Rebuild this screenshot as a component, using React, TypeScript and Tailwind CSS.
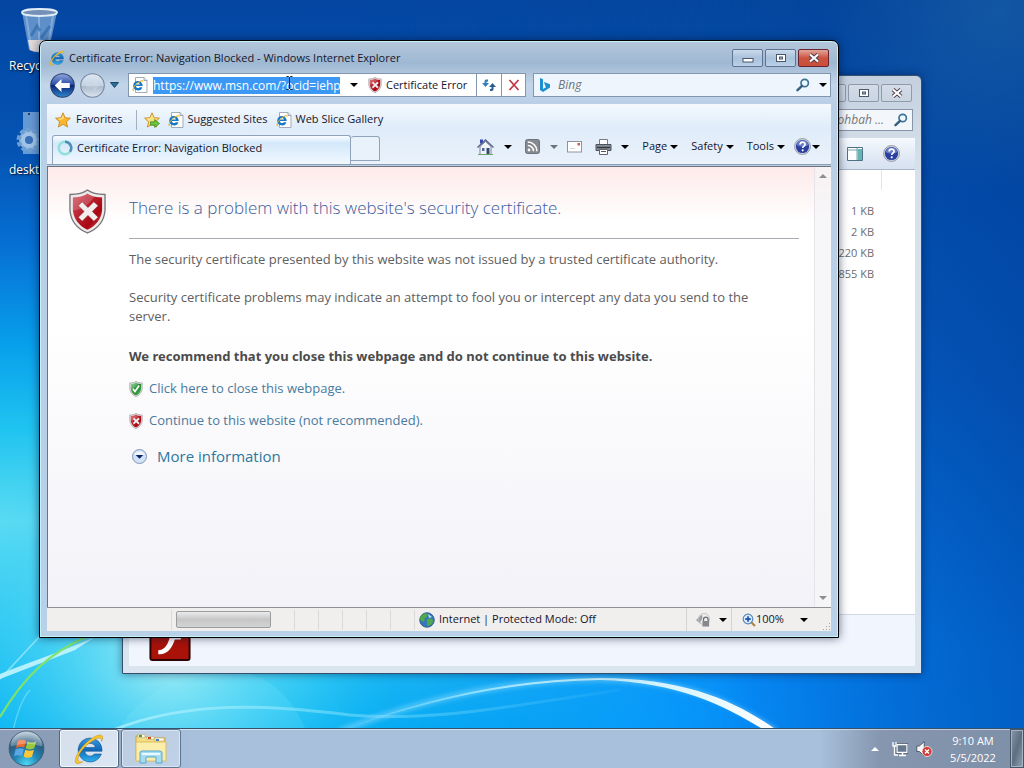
import React from "react";

type IconProps = { className?: string };

const Wallpaper = () => (
  <svg className="absolute inset-0 h-full w-full" viewBox="0 0 1024 768" preserveAspectRatio="none" aria-hidden="true">
    <defs>
      <linearGradient id="sky" x1="0" y1="0" x2="0" y2="1">
        <stop offset="0" stopColor="#04479f" />
        <stop offset="0.2" stopColor="#0450ae" />
        <stop offset="0.5" stopColor="#0560c8" />
        <stop offset="0.85" stopColor="#0481f2" />
        <stop offset="1" stopColor="#0484f4" />
      </linearGradient>
      <linearGradient id="leftSky" x1="0" y1="0" x2="0" y2="1">
        <stop offset="0" stopColor="#0446a2" />
        <stop offset="0.2" stopColor="#0454b4" />
        <stop offset="0.32" stopColor="#0670d4" />
        <stop offset="0.45" stopColor="#07a0ec" />
        <stop offset="0.56" stopColor="#20c4f0" />
        <stop offset="0.68" stopColor="#5cdcf2" />
        <stop offset="0.8" stopColor="#35ccf2" />
        <stop offset="0.95" stopColor="#08b4f2" />
      </linearGradient>
      <linearGradient id="leftFade" x1="0" y1="0" x2="1" y2="0">
        <stop offset="0" stopColor="#fff" />
        <stop offset="0.4" stopColor="#fff" />
        <stop offset="1" stopColor="#000" />
      </linearGradient>
      <mask id="leftMask">
        <rect width="760" height="768" fill="url(#leftFade)" />
      </mask>
      <radialGradient id="glow" cx="170" cy="655" r="230" gradientUnits="userSpaceOnUse">
        <stop offset="0" stopColor="#b4f2f4" stopOpacity="0.9" />
        <stop offset="0.45" stopColor="#6ce0f6" stopOpacity="0.5" />
        <stop offset="1" stopColor="#20c0f8" stopOpacity="0" />
      </radialGradient>
      <radialGradient id="midGlow" cx="620" cy="740" r="280" gradientUnits="userSpaceOnUse">
        <stop offset="0" stopColor="#0898ff" stopOpacity="0.8" />
        <stop offset="1" stopColor="#0898ff" stopOpacity="0" />
      </radialGradient>
      <linearGradient id="rightShade" x1="0" y1="0" x2="1" y2="0">
        <stop offset="0" stopColor="#003a94" stopOpacity="0" />
        <stop offset="1" stopColor="#003a94" stopOpacity="0.5" />
      </linearGradient>
      <linearGradient id="arc" x1="0" y1="0" x2="1" y2="0">
        <stop offset="0" stopColor="#8ce8ff" stopOpacity="0.2" />
        <stop offset="0.4" stopColor="#b0ecff" stopOpacity="0.9" />
        <stop offset="1" stopColor="#ffffff" />
      </linearGradient>
      <linearGradient id="faintArc" x1="0" y1="0" x2="1" y2="0">
        <stop offset="0" stopColor="#b4f4ff" stopOpacity="0.7" />
        <stop offset="0.5" stopColor="#9aeaff" stopOpacity="0.4" />
        <stop offset="1" stopColor="#9aeaff" stopOpacity="0.05" />
      </linearGradient>
      <radialGradient id="haze" cx="1000" cy="10" r="180" gradientUnits="userSpaceOnUse">
        <stop offset="0" stopColor="#2a78b0" stopOpacity="0.4" />
        <stop offset="1" stopColor="#2a78b0" stopOpacity="0" />
      </radialGradient>
      <filter id="soft" x="-10%" y="-30%" width="120%" height="160%">
        <feGaussianBlur stdDeviation="2.5" />
      </filter>
    </defs>
    <rect width="1024" height="768" fill="url(#sky)" />
    <rect width="1024" height="768" fill="url(#midGlow)" />
    <rect width="760" height="768" fill="url(#leftSky)" mask="url(#leftMask)" />
    <rect width="1024" height="768" fill="url(#glow)" />
    <rect x="720" width="304" height="768" fill="url(#rightShade)" />
    <rect width="1024" height="768" fill="url(#haze)" />
    <path d="M115 735C140 690 190 668 230 670C275 674 296 705 308 735Z" fill="#8ff0ff" opacity="0.15" />
    <path d="M116 729C190 700 270 705 350 715C440 722 520 704 620 690" fill="none" stroke="url(#faintArc)" strokeWidth="3" />
    <path d="M340 731C420 700 510 679 600 679C690 680 735 705 776 731" fill="none" stroke="#8fdcff" strokeWidth="5" opacity="0.6" filter="url(#soft)" />
    <path d="M340 731C420 699 510 679 600 678C690 678 740 704 778 731L766 731C725 706 680 682 600 680C510 681 420 702 340 731Z" fill="url(#arc)" />
    <path d="M0 674C30 662 60 652 95 637L75 650L0 679Z" fill="#d4faff" opacity="0.8" />
    <path d="M0 679L40 636" stroke="#c4f7ff" strokeWidth="1.5" opacity="0.6" />
    <path d="M0 717C25 675 50 653 86 637" fill="none" stroke="#7ee36a" strokeWidth="2.2" />
    <path d="M12 735C17 712 22 698 30 690" fill="none" stroke="#8de9fb" opacity="0.5" strokeWidth="1.5" />
  </svg>
);

const IeLogo = ({ className }: IconProps) => (
  <svg className={className} viewBox="0 0 32 32" aria-hidden="true">
    <defs>
      <linearGradient id="ieBlue" x1="0" y1="0" x2="0" y2="1">
        <stop offset="0" stopColor="#3a9be0" />
        <stop offset="0.5" stopColor="#1268b8" />
        <stop offset="1" stopColor="#2db4ee" />
      </linearGradient>
    </defs>
    <path d="M17 5a12 12 0 1 0 11.400 16H21.500a5.500 5.500 0 0 1-9.800-2.800H29V17A12 12 0 0 0 17 5Zm-5.200 9.500a5.400 5.400 0 0 1 10.500 0Z" fill="url(#ieBlue)" stroke="#0d4d92" strokeWidth="0.6" />
    <path d="M10 28.500C5 32 1 31.500 2.500 25.500C4.500 18 14 7 23 3C29 .6 31.500 3 28.500 8.500C29 4.500 26.500 4 22 6.500C13 11 5.500 20 5 25.500C4.800 29 7 29.500 10 28.500Z" fill="#f6c52c" stroke="#c4901a" strokeWidth="0.5" />
  </svg>
);

const PageIcon = ({ className }: IconProps) => (
  <svg className={className} viewBox="0 0 16 16" aria-hidden="true">
    <path d="M3.500.5h8.500l3 3V15.500H3.500Z" fill="#fff" stroke="#a3abb7" />
    <path d="M12 .5v3h3" fill="#dfe6ee" stroke="#8a93a0" strokeWidth="0.8" />
    <path d="M5.800 4A4.700 4.700 0 1 0 10.400 10.200H7.700a2.200 2.200 0 0 1-3.900-1.100h6.900A4.800 4.800 0 0 0 5.800 4Zm-2 3.500a2.200 2.200 0 0 1 4.100 0Z" fill="#1878c8" />
    <path d="M3 13.500C1 14.500 0 14 .6 12C1.500 9 6 4.500 9.500 3.300C11.500 2.700 12 4 11 5.500C11 4 10 4 8.500 4.800C5 6.500 1.800 10 1.700 12C1.700 13.300 2.200 13.600 3 13.500Z" fill="#e9b92a" />
  </svg>
);

const Shield = ({ className, ok }: IconProps & { ok?: boolean }) => (
  <svg className={className} viewBox="0 0 38 46" aria-hidden="true">
    <defs>
      <linearGradient id="shieldRed" x1="0" y1="0" x2="1" y2="1">
        <stop offset="0" stopColor="#d0505c" />
        <stop offset="0.45" stopColor="#b81c2a" />
        <stop offset="0.7" stopColor="#a80712" />
        <stop offset="1" stopColor="#d8505a" />
      </linearGradient>
      <linearGradient id="shieldGreen" x1="0" y1="0" x2="1" y2="1">
        <stop offset="0" stopColor="#7cc884" />
        <stop offset="0.5" stopColor="#1f8a2c" />
        <stop offset="1" stopColor="#56b860" />
      </linearGradient>
    </defs>
    <path d="M19 1C14 5 7 5.500 1 5.500V22C2 33 9 41 19 45C29 41 36 33 37 22V5.500C31 5.500 24 5 19 1Z" fill="#eeeaea" stroke="#77777c" strokeWidth="1.400" />
    <path d="M19 4.500C14 8 8.500 8.500 4 8.500V22C5 31 10.500 38 19 41.800C27.500 38 33 31 34 22V8.500C29.500 8.500 24 8 19 4.500Z" fill={ok ? "url(#shieldGreen)" : "url(#shieldRed)"} />
    <path d="M19 4.500C14 8 8.500 8.500 4 8.500V22C14 21 22 15 26 7.300C23.500 6.800 21 6 19 4.500Z" fill="#fff" opacity="0.18" />
    {ok ? (
      <path d="M10 22l6 8L28 13" fill="none" stroke="#fff" strokeWidth="5" />
    ) : (
      <path d="M9.500 17L13.500 13l6 6 6-6 4.500 4-6 6 6 6-4.500 4-6-6-6 6-4-4 6-6Z" fill="#f3eeee" stroke="#7d0e18" strokeWidth="0.5" />
    )}
  </svg>
);

const Caret = ({ className = "text-black" }: IconProps) => (
  <svg className={`h-1 w-2 shrink-0 ${className}`} viewBox="0 0 8 4" aria-hidden="true">
    <path d="M0 0h8L4 4Z" fill="currentColor" />
  </svg>
);

const Magnifier = ({ className }: IconProps) => (
  <svg className={className} viewBox="0 0 14 14" aria-hidden="true">
    <circle cx="8.700" cy="5" r="3.700" fill="#eef8ff" stroke="#3d7296" strokeWidth="1.700" />
    <path d="M6 7.800L1.500 12.200" stroke="#34607f" strokeWidth="2.400" strokeLinecap="round" />
  </svg>
);

const HelpIcon = ({ className }: IconProps) => (
  <svg className={className} viewBox="0 0 16 16" aria-hidden="true">
    <circle cx="8" cy="8" r="7.500" fill="#cdd2dc" stroke="#8d94a4" strokeWidth="0.8" />
    <circle cx="8" cy="8" r="6.200" fill="#2a3f9e" />
    <path d="M2.500 6.500A5.700 5.700 0 0 1 13.500 6.500C10 8.500 6 8.500 2.500 6.500Z" fill="#7f92d8" opacity="0.75" />
    <path d="M5.800 6.200c0-3.200 4.700-3 4.600-.2 0 1.700-2.200 1.700-2.200 3.400" fill="none" stroke="#fff" strokeWidth="1.600" />
    <circle cx="8.200" cy="11.600" r="1" fill="#fff" />
  </svg>
);

const Star = ({ className, add }: IconProps & { add?: boolean }) => (
  <svg className={className} viewBox="0 0 16 16" aria-hidden="true">
    <path d="M8 .8l2.100 4.900 5.300.5-4 3.600 1.200 5.200L8 12.300 3.400 15l1.200-5.200-4-3.600 5.300-.5Z" fill={add ? "#f9df73" : "#f8b62c"} stroke="#c98a1c" strokeWidth="0.9" strokeLinejoin="round" />
    <path d="M8 2.800l1.200 3.500-4.200 2-2.400-1.500 3.800-.5Z" fill="#fde9a0" opacity="0.8" />
    {add && <path d="M6.500 9.800h4.200V7.600l4.800 3.900-4.800 3.900v-2.200H6.500Z" fill="#6cc43c" stroke="#3f8a22" strokeWidth="0.8" />}
  </svg>
);

const BackArrow = () => (
  <svg className="h-[25px] w-[25px]" viewBox="0 0 24 24" aria-hidden="true">
    <defs>
      <linearGradient id="back" x1="0" y1="0" x2="0" y2="1">
        <stop offset="0" stopColor="#93a9dc" />
        <stop offset="0.45" stopColor="#2c4fa8" />
        <stop offset="0.5" stopColor="#0c2474" />
        <stop offset="1" stopColor="#2f8ad0" />
      </linearGradient>
    </defs>
    <circle cx="12" cy="12" r="11.300" fill="url(#back)" stroke="#2a3f70" />
    <path d="M4.500 12L11 5.800v3.700h8v5h-8v3.700Z" fill="#fff" />
  </svg>
);

const ForwardArrow = () => (
  <svg className="h-[25px] w-[25px]" viewBox="0 0 24 24" aria-hidden="true">
    <defs>
      <linearGradient id="fwd" x1="0" y1="0" x2="0" y2="1">
        <stop offset="0" stopColor="#dfe8f3" />
        <stop offset="0.5" stopColor="#c5d2e2" />
        <stop offset="0.52" stopColor="#a9b8ca" />
        <stop offset="1" stopColor="#dce6f0" />
      </linearGradient>
    </defs>
    <circle cx="12" cy="12" r="11.300" fill="url(#fwd)" stroke="#76859b" />
    <path d="M19 12l-6-5.500V10H5.500v4H13v3.500Z" fill="#d6dfea" opacity="0.35" />
  </svg>
);

const WindowButton = ({ kind, dim }: { kind: "min" | "max" | "close"; dim?: boolean }) => {
  const tone = dim
    ? "border-[#8e9bab] bg-gradient-to-b from-[#d3dce7] to-[#cad5e2]"
    : kind === "close"
      ? "border-[#6b2330] bg-gradient-to-b from-[#e0a59c] via-[#cc5340] to-[#c8503c]"
      : "border-[#5e7390] bg-gradient-to-b from-[#cbdbec] via-[#a9c1db] to-[#b9d0e8]";
  return (
    <button aria-label={kind} className={`flex h-[18px] w-[31px] items-center justify-center rounded-[2px] border ${tone}`}>
      <svg className="h-3 w-3" viewBox="0 0 12 12" aria-hidden="true">
        {kind === "min" && <rect x="1" y="6.500" width="10" height="3.500" fill="#fff" stroke="#4b566a" />}
        {kind === "max" && (
          <>
            <rect x="1.500" y="2.500" width="9" height="7" fill="#fff" stroke="#4b566a" />
            <rect x="4.500" y="5" width="3" height="2" fill="#a9c1db" stroke="#4b566a" />
          </>
        )}
        {kind === "close" && (
          <>
            <path d="M2 2.500l8 7M10 2.500l-8 7" stroke="#4b3c48" strokeWidth="4" />
            <path d="M2 2.500l8 7M10 2.500l-8 7" stroke="#fff" strokeWidth="2.200" />
          </>
        )}
      </svg>
    </button>
  );
};

const DesktopIcons = () => (
  <div className="absolute left-[9px] top-[6px] text-xs leading-4 text-white [text-shadow:1px_1px_2px_#000]">
    <a href="#recycle" className="block w-20">
      <svg className="ml-2 h-12 w-12" viewBox="0 0 48 48" aria-hidden="true">
        <path d="M5 6L12 44Q22 49 32 44L40 6Z" fill="#a9cbe8" opacity="0.55" />
        <path d="M11 34L13 44Q22 48 31 44L32 34Z" fill="#efe0d8" opacity="0.9" />
        <path d="M9 9l5 32M22 10v34M36 9l-5 32" stroke="#d6ecff" strokeWidth="2" opacity="0.3" />
        <path d="M14 30l6-10 3 5M33 20l-9 12" stroke="#2868a8" strokeWidth="3" fill="none" opacity="0.6" />
        <ellipse cx="22.500" cy="6.500" rx="17.500" ry="3.500" fill="#7590b8" stroke="#e2edf6" strokeWidth="1.800" />
      </svg>
      <span className="mt-1 block">Recycle Bin</span>
    </a>
    <a href="#desktop-ini" className="mt-9 block w-20">
      <svg className="ml-1 h-12 w-12" viewBox="0 0 48 48" aria-hidden="true">
        <path d="M10 2h28v42H10Z" fill="#8fb8e4" opacity="0.7" />
        <circle cx="16" cy="4" r="1" fill="#123" />
        <circle cx="16" cy="30" r="10" fill="#8db4dc" stroke="#6e9fd0" strokeWidth="5" strokeDasharray="4 2.300" />
        <circle cx="16" cy="30" r="8" fill="#9fc4e8" />
        <circle cx="16" cy="30" r="4" fill="#3a70b8" />
      </svg>
      <span className="mt-1 block">desktop.ini</span>
    </a>
  </div>
);

const ExplorerWindow = () => (
  <section aria-label="Windows Explorer" className="absolute bottom-[54px] left-[122px] right-[102px] top-[75px] flex flex-col rounded-t-md border border-[#34506e] bg-gradient-to-b from-[#c4d0de] via-[#d6e1ec] via-15% to-[#dae5ef] px-[6px] pb-[7px] shadow-[0_0_8px_rgba(0,20,60,0.5)]">
    <div className="flex h-[33px] justify-end gap-[2px] pr-[3px] pt-2">
      <WindowButton kind="min" dim />
      <WindowButton kind="max" dim />
      <WindowButton kind="close" dim />
    </div>
    <div className="flex justify-end pr-[2px]">
      <label className="flex h-[22px] w-52 items-center justify-end border border-[#8795a8] bg-[#f3f7fc] pr-1 text-xs italic text-[#777]">
        <input aria-label="Search folder" readOnly value="Search ohbah ..." className="w-[120px] bg-transparent pr-[10px] text-right outline-none" />
        <Magnifier className="h-[14px] w-[14px]" />
      </label>
    </div>
    <div className="mt-[7px] flex h-8 shrink-0 items-center justify-end gap-5 border-b border-[#a8b7ca] bg-gradient-to-b from-[#f6fafe] via-[#e4ecf6] to-[#d6e2f0] pr-[15px]">
      <button aria-label="Preview pane">
        <svg className="h-4 w-4" viewBox="0 0 16 16" aria-hidden="true">
          <path d="M.5 1.500h15v13H.5Z" fill="#fff" stroke="#527084" />
          <path d="M.5 4h15M10 2v12" stroke="#7fa0ac" />
          <path d="M10.500 3h4.500v11h-4.500Z" fill="#65b4b4" />
        </svg>
      </button>
      <button aria-label="Help"><HelpIcon className="h-[17px] w-[17px]" /></button>
    </div>
    <div className="flex flex-1 justify-end bg-white">
      <table className="h-fit text-right text-[11px] text-[#6d6d6d]">
        <thead><tr><th className="h-[31px] w-20" /></tr></thead>
        <tbody>
          {["1 KB", "2 KB", "220 KB", "855 KB"].map((size) => (
            <tr key={size}><td className="h-[21px] pr-[7px]">{size}</td></tr>
          ))}
        </tbody>
      </table>
      <div className="h-5 w-[34px] border-l border-[#e2e6ec]" />
    </div>
    <div className="flex h-[52px] items-start border-t border-[#d0d7e0] bg-[#f1f5fd] pl-5">
      <svg className="h-[46px] w-[42px]" viewBox="0 0 42 47" aria-hidden="true">
        <rect x="1" y="1" width="40" height="45" rx="2" fill="#a81208" stroke="#2c0503" strokeWidth="2" />
        <path d="M9 36c10-1 10-10 14-19 2-5 6-8 11-8v6c-4 0-5 2-6 5h4v5h-6C23 34 18 41 9 40Z" fill="#fff" />
      </svg>
    </div>
  </section>
);

const TitleBar = () => (
  <header className="flex h-8 shrink-0 justify-between pl-[2px] pr-[2px]">
    <h1 className="flex items-center gap-1 pt-[2px] text-[11px] text-[#15152c]">
      <IeLogo className="h-4 w-4" />
      <span className="whitespace-nowrap">Certificate Error: Navigation Blocked - Windows Internet Explorer</span>
    </h1>
    <div className="flex gap-[2px] pt-2">
      <WindowButton kind="min" />
      <WindowButton kind="max" />
      <WindowButton kind="close" />
    </div>
  </header>
);

const AddressRow = () => (
  <div className="flex h-[31px] shrink-0 items-start">
    <div className="flex h-6 w-[81px] items-center gap-[5px] pl-[3px]">
      <button aria-label="Back"><BackArrow /></button>
      <button aria-label="Forward"><ForwardArrow /></button>
      <button aria-label="Recent pages">
        <svg className="h-[6px] w-[9px]" viewBox="0 0 9 6" aria-hidden="true">
          <path d="M.5.500h8L4.500 5.500Z" fill="#2a6ea0" stroke="#1d4666" />
        </svg>
      </button>
    </div>
    <div className="relative flex h-6 flex-1 items-center border border-[#8296b0] bg-white pl-[3px] text-[11px]">
      <PageIcon className="h-4 w-4 shrink-0" />
      <input aria-label="Address" readOnly value="https://www.msn.com/?ocid=iehp" className="ml-[5px] h-[17px] w-[187px] shrink-0 bg-[#3b99f5] text-xs text-white outline-none" />
      <button aria-label="Show address history" className="ml-[10px] flex h-full w-3 items-center"><Caret /></button>
      <button className="ml-[6px] flex flex-1 items-center gap-1 whitespace-nowrap text-[#15152c]">
        <Shield className="h-4 w-[14px]" />
        Certificate Error
      </button>
      <button aria-label="Refresh" className="flex h-full w-[25px] items-center justify-center border-l border-[#8296b0]">
        <svg className="h-4 w-4" viewBox="0 0 16 16" aria-hidden="true">
          <path d="M7 2.500H5.200Q3.500 2.500 3.500 4.500V6H1L4.500 10 8 6H5.500V5Q5.500 4.500 7 4.500Z" fill="#2f7fbe" />
          <path d="M9 14h1.800Q12.500 14 12.500 12V10H15L11.500 6 8 10h2.500v1.500Q10.500 12 9 12Z" fill="#2a5f90" />
        </svg>
      </button>
      <button aria-label="Stop" className="flex h-full w-6 items-center justify-center border-l border-[#8296b0]">
        <svg className="h-3 w-3" viewBox="0 0 12 12" aria-hidden="true">
          <path d="M1.500 1l9 10M10.500 1l-9 10" stroke="#c23a44" strokeWidth="1.800" />
        </svg>
      </button>
      <svg className="pointer-events-none absolute left-[157px] top-0 h-[18px] w-[7px]" viewBox="0 0 7 18" aria-hidden="true">
        <path d="M.5 2.500h2l1 1 1-1h2M3.500 3.500v11M.5 15.500h2l1-1 1 1h2" fill="none" stroke="#222" />
      </svg>
    </div>
    <div className="ml-[7px] flex h-6 w-[38%] items-center border border-[#8296b0] bg-[#eef5fd] pl-[6px] pr-[3px] text-xs">
      <svg className="h-4 w-[10px] shrink-0" viewBox="0 0 10 16" aria-hidden="true">
        <path d="M0 1l3 1.200v9.800l3-1.700-1.400-3.300L4 5l6 2.300v3.200L3 15l-3-2Z" fill="#1b8fd0" />
      </svg>
      <input aria-label="Bing search" placeholder="Bing" className="ml-2 w-10 flex-1 bg-transparent italic outline-none placeholder:text-[#6e7480]" />
      <button aria-label="Search"><Magnifier className="h-[14px] w-[14px]" /></button>
      <button aria-label="Search options" className="ml-[9px]"><Caret /></button>
    </div>
  </div>
);

const CommandItem = ({ children, gap = "gap-[10px]", dim }: { children: React.ReactNode; gap?: string; dim?: boolean }) => (
  <button className={`flex items-center whitespace-nowrap ${gap}`}>
    {children}
    <Caret className={dim ? "text-[#6b7280]" : "text-black"} />
  </button>
);

const CommandArea = () => (
  <div className="h-[61px] shrink-0 border-b border-[#8e9db1] bg-gradient-to-b from-[#f4f9fe] via-[#dfecf9] via-40% to-[#eaf2fb] text-[11px] text-[#15152c]">
    <nav className="flex h-[31px] items-center pl-2">
      <button className="flex items-center gap-[5px]"><Star className="h-4 w-4" />Favorites</button>
      <span className="ml-[13px] h-5 w-px bg-[#a4b0c0]" />
      <button aria-label="Add to Favorites Bar" className="ml-[7px]"><Star add className="h-4 w-4" /></button>
      <a href="#suggested" className="ml-2 flex items-center gap-1 whitespace-nowrap"><PageIcon className="h-4 w-4" />Suggested Sites</a>
      <a href="#webslice" className="ml-2 flex items-center gap-1 whitespace-nowrap"><PageIcon className="h-4 w-4" />Web Slice Gallery</a>
    </nav>
    <div className="flex h-[29px] items-stretch pl-[5px]">
      <button className="flex min-w-[120px] max-w-[299px] flex-1 items-center gap-1 overflow-hidden rounded-t-[3px] border border-b-0 border-[#91a3ba] bg-gradient-to-b from-[#fafdff] via-[#d3e8fa] via-25% to-[#f1f8ff] pb-1 pl-1">
        <svg className="h-4 w-4 shrink-0" viewBox="0 0 16 16" aria-hidden="true">
          <circle cx="8" cy="8" r="6.300" fill="none" stroke="#94dfdc" strokeWidth="2.500" />
          <path d="M8 1.700a6.300 6.300 0 0 1 5 10" fill="none" stroke="#4f91b4" strokeWidth="2.500" />
        </svg>
        <span className="whitespace-nowrap">Certificate Error: Navigation Blocked</span>
      </button>
      <button aria-label="New tab" className="mb-[3px] mt-px w-[29px] rounded-t-[3px] border border-l-0 border-[#91a3ba] bg-[#e9f1fa]" />
      <div className="flex flex-1 items-center justify-end gap-[13px] pb-[6px] pr-[11px]">
        <CommandItem>
          <svg className="h-[18px] w-[17px]" viewBox="0 0 17 18" aria-hidden="true">
            <path d="M3 1.500h3v4H3Z" fill="#3a49b8" />
            <path d="M3 8.500L8.500 3.500 14 8.500V16.500H3Z" fill="#f2f4f8" stroke="#7c86a0" />
            <path d="M.5 9.500L8.500 2l8 7.500" fill="none" stroke="#59658a" strokeWidth="1.500" />
            <path d="M9.500 10h3v6.500h-3Z" fill="#384a6c" />
            <path d="M5 10h2.500v3H5Z" fill="#4e69a0" />
            <path d="M1 16.500h15" stroke="#68a868" />
          </svg>
        </CommandItem>
        <CommandItem dim>
          <svg className="h-[15px] w-[15px]" viewBox="0 0 15 15" aria-hidden="true">
            <rect x=".5" y=".5" width="14" height="14" rx="2" fill="#858990" stroke="#6e737c" />
            <circle cx="4" cy="11" r="1.400" fill="#fff" />
            <path d="M2.800 6.500a5.700 5.700 0 0 1 5.700 5.700M2.800 3a9.200 9.200 0 0 1 9.200 9.200" stroke="#fff" strokeWidth="1.600" fill="none" />
          </svg>
        </CommandItem>
        <button aria-label="Read mail" className="-ml-1">
          <svg className="h-3 w-[15px]" viewBox="0 0 15 12" aria-hidden="true">
            <rect x=".5" y=".5" width="14" height="10.500" fill="#fff" stroke="#8f949c" />
            <path d="M3 7.500h5" stroke="#d2d6dc" />
            <rect x="10.500" y="2" width="2.500" height="2.500" fill="#cf5a52" />
          </svg>
        </button>
        <CommandItem gap="gap-[9px]">
          <svg className="h-4 w-[17px]" viewBox="0 0 17 16" aria-hidden="true">
            <path d="M4.500.5h8v5h-8Z" fill="#fff" stroke="#777d86" />
            <path d="M1 5.500h15v6H1Z" fill="#8a9098" stroke="#4d535c" />
            <path d="M2 8.500h13" stroke="#33383f" strokeWidth="1.500" />
            <path d="M4.500 10.500h8v5h-8Z" fill="#fff" stroke="#60656d" />
            <path d="M6 12.500h5" stroke="#555" />
          </svg>
        </CommandItem>
        <CommandItem gap="gap-[3px]">Page</CommandItem>
        <CommandItem gap="gap-[3px]">Safety</CommandItem>
        <CommandItem gap="gap-[3px]">Tools</CommandItem>
        <div className="-ml-1"><CommandItem gap="gap-px"><HelpIcon className="h-[17px] w-[17px]" /></CommandItem></div>
      </div>
    </div>
  </div>
);

const ErrorPage = () => (
  <main className="mt-px flex min-h-0 flex-1 border-l border-t border-[#6c7480] bg-[linear-gradient(180deg,#fdeaea_0px,#ffffff_55px,#ffffff_35%,#f2f2f8_100%)]">
    <div className="flex flex-1 items-start pl-[21px] pt-[21px]">
      <Shield className="mt-px h-[45px] w-[37px] shrink-0" />
      <article className="ml-[23px] flex-1 pr-[15px] text-[13px] leading-[19px] text-[#606060]">
        <h2 className="border-b border-[#a9abb0] pb-[18px] pt-2 text-[17px] font-light leading-6 text-[#3c5c9c]">There is a problem with this website&apos;s security certificate.</h2>
        <p className="mt-[11px]">The security certificate presented by this website was not issued by a trusted certificate authority.</p>
        <p className="mt-[19px] pr-5">Security certificate problems may indicate an attempt to fool you or intercept any data you send to the server.</p>
        <p className="mt-[21px] font-['Noto_Sans',sans-serif] font-bold text-[#4b4b4b]">We recommend that you close this webpage and do not continue to this website.</p>
        <ul className="mt-[13px] space-y-[13px] text-[#4a7a9e]">
          <li><a href="#close" className="flex items-center gap-[6px]"><Shield ok className="h-4 w-[14px]" />Click here to close this webpage.</a></li>
          <li><a href="#continue" className="flex items-center gap-[6px]"><Shield className="h-4 w-[14px]" />Continue to this website (not recommended).</a></li>
        </ul>
        <button className="ml-[3px] mt-4 flex items-center gap-[10px] text-[15px] leading-5 text-[#2b789f]">
          <svg className="h-[15px] w-[15px]" viewBox="0 0 15 15" aria-hidden="true">
            <circle cx="7.500" cy="7.500" r="7" fill="#cfe2f8" stroke="#8296b4" />
            <path d="M2 6a6 6 0 0 1 11 0Z" fill="#fff" opacity="0.7" />
            <path d="M3.700 6h7.600L7.500 9.800Z" fill="#0b2265" />
          </svg>
          More information
        </button>
      </article>
    </div>
    <div className="flex w-[17px] flex-col items-center justify-between border-l border-[#e6e4e8] bg-[#f5f4f6]/80 py-[7px]">
      <button aria-label="Scroll up"><Caret className="rotate-180 text-[#8c8f94]" /></button>
      <button aria-label="Scroll down"><Caret className="text-[#8c8f94]" /></button>
    </div>
  </main>
);

const StatusBar = () => (
  <footer className="flex h-[24px] shrink-0 items-center border-t border-[#8e9096] bg-[#f1efee] text-[11px] text-[#15152c]">
    <span className="h-5 w-[125px] border-r border-[#dcdad8]" />
    <span className="ml-1 h-[17px] w-[95px] rounded-[2px] border border-[#9a9c9e] bg-gradient-to-b from-[#ececec] via-[#c6c6c6] to-[#d4d4d4]" />
    <span className="h-5 w-6 border-r border-[#dcdad8]" />
    <span className="h-5 w-6 border-r border-[#dcdad8]" />
    <span className="h-5 w-6 border-r border-[#dcdad8]" />
    <span className="h-5 w-6 border-r border-[#dcdad8]" />
    <span className="h-5 w-6 border-r border-[#dcdad8]" />
    <span className="h-5 w-6 border-r border-[#dcdad8]" />
    <span className="flex flex-1 items-center gap-1 whitespace-nowrap pl-1">
      <svg className="h-4 w-4" viewBox="0 0 16 16" aria-hidden="true">
        <circle cx="8" cy="8" r="7.300" fill="#3477bc" stroke="#2a5580" strokeWidth="0.8" />
        <path d="M3 3c3-2 5-2 5.500 0S5 6 5.500 8 3 10 1.500 8 2 4 3 3ZM9 7c3-1 5 0 5 2s-3 5-5 5 0-3-1-4 0-3 1-3Z" fill="#4fa94c" />
        <path d="M9 2l4 3-3 1Z" fill="#b8e3f2" />
      </svg>
      Internet | Protected Mode: Off
    </span>
    <button aria-label="Protected mode" className="flex h-full w-[45px] items-center gap-2 border-l border-[#d5d3d1] pl-2">
      <svg className="h-4 w-4" viewBox="0 0 16 16" aria-hidden="true">
        <path d="M7 2.500L1 8l4.500 4V9.500C7 8 8 6 7 2.500Z" fill="#9c9ea2" />
        <circle cx="9" cy="7" r="5.500" fill="none" stroke="#c0c2c4" />
        <path d="M8.500 9v-1.500a2.300 2.300 0 0 1 4.600 0V9" fill="none" stroke="#6c6f73" strokeWidth="1.300" />
        <rect x="7.500" y="9" width="6.600" height="5.500" fill="#85888c" />
      </svg>
      <Caret />
    </button>
    <button className="flex h-full w-[100px] items-center border-l border-[#d5d3d1] pl-[10px]">
      <svg className="h-[14px] w-[14px]" viewBox="0 0 14 14" aria-hidden="true">
        <path d="M9 9l4 4" stroke="#a9863e" strokeWidth="2.200" />
        <circle cx="6" cy="6" r="4.800" fill="#dcecfb" stroke="#5a86b8" strokeWidth="1.200" />
        <path d="M6 3.300v5.400M3.300 6h5.400" stroke="#1c5cb8" strokeWidth="1.800" />
      </svg>
      <span className="w-11 text-left">100%</span>
      <Caret />
      <svg className="ml-auto h-[9px] w-[9px] self-end" viewBox="0 0 9 9" aria-hidden="true">
        <path d="M7 1h1v1H7ZM4 4h1v1H4ZM7 4h1v1H7ZM1 7h1v1H1ZM4 7h1v1H4ZM7 7h1v1H7Z" fill="#9fa1a4" />
      </svg>
    </button>
  </footer>
);

const BrowserWindow = () => (
  <section aria-label="Internet Explorer" className="absolute bottom-[90px] left-[39px] right-[185px] top-10 flex flex-col rounded-t-[7px] border border-black bg-[linear-gradient(180deg,#b4c7dc_0px,#9fb8d2_22px,#c3d5e9_44px,#b9cfe6_64px,#b8d0e8_100%)] px-[7px] pb-[6px] shadow-[inset_0_0_0_1px_#c8f0fb,0_0_10px_rgba(0,20,60,0.6)]">
    <TitleBar />
    <AddressRow />
    <CommandArea />
    <ErrorPage />
    <StatusBar />
  </section>
);

const Taskbar = () => (
  <footer className="relative flex h-10 shrink-0 items-stretch border-t border-[#33526e] bg-[linear-gradient(90deg,#8c9db8_0px,#8c9db8_56px,#a8c0dc_190px,#a8c0dc_80%,#8596ae_86%,#7e90a8_100%)] text-[11px] text-white shadow-[inset_0_1px_0_rgba(255,255,255,0.5)]">
    <button aria-label="Start" className="flex w-[59px] items-center pl-2">
      <svg className="h-[37px] w-[37px]" viewBox="0 0 38 38" aria-hidden="true">
        <defs>
          <radialGradient id="orb" cx="0.5" cy="0.95" r="0.9">
            <stop offset="0" stopColor="#4fd8f4" />
            <stop offset="0.4" stopColor="#2285b4" />
            <stop offset="0.75" stopColor="#2c5a7e" />
            <stop offset="1" stopColor="#a4bccb" />
          </radialGradient>
        </defs>
        <circle cx="19" cy="19" r="17.800" fill="url(#orb)" stroke="#395a78" />
        <path d="M10 11.500c3-2 6-2 8.500-.5l-1.800 7c-3-1.500-5.500-1-8.500.5Z" fill="#ee6a32" />
        <path d="M20 11.800c3 1.500 6 1.500 9-.3l-2 7.300c-3 1.500-6 1.500-8.800 0Z" fill="#98c83e" />
        <path d="M7.800 20c3-1.600 5.600-1.700 8.500-.4l-2 7.200c-3-1.500-5.500-1.200-8 .2Z" fill="#5ba6e4" />
        <path d="M17.800 20.200c3 1.500 5.800 1.400 8.800 0l-2 7.200c-3 1.500-6 1.300-8.600-.2Z" fill="#fcc836" />
        <path d="M3 17A16 16 0 0 1 35 17C25 13 13 13 3 17Z" fill="#fff" opacity="0.28" />
      </svg>
    </button>
    <button aria-label="Internet Explorer" className="flex w-[60px] items-center justify-center rounded-[3px] border border-[#52667e] bg-gradient-to-br from-[#d6deeb] to-[#dbe7f3] shadow-[inset_0_0_0_1px_#f2f7fc]">
      <IeLogo className="h-8 w-8" />
    </button>
    <button aria-label="Windows Explorer" className="ml-[2px] flex w-[60px] items-center justify-center rounded-[3px] border border-[#60758f] bg-gradient-to-br from-[#bccbe0] to-[#c0d3e8] shadow-[inset_0_0_0_1px_#d8e5f2]">
      <svg className="h-8 w-[34px]" viewBox="0 0 34 32" aria-hidden="true">
        <path d="M2 3h9l2 2h18v22H2Z" fill="#f3dc82" stroke="#c9a548" />
        <path d="M4 1.500h7v3H4ZM13 3.500h7v3h-7ZM21 5h9v3h-9Z" fill="#fffdf2" stroke="#c0a868" strokeWidth="0.6" />
        <path d="M5 2h3v2H5Z" fill="#3aa83a" />
        <path d="M14 4h3v2h-3Z" fill="#d0452c" />
        <path d="M22 6h3v2h-3Z" fill="#4a7cc4" />
        <path d="M2 9h30v19H2Z" fill="#fbeeaa" stroke="#dabd62" />
        <path d="M6 30V20q0-2 2-2h18q2 0 2 2v10h-6v-6H12v6Z" fill="#a6dcf2" stroke="#5aa7cc" />
        <path d="M8 21h18" stroke="#e9f9ff" strokeWidth="2" />
      </svg>
    </button>
    <div className="ml-auto flex items-center">
      <button aria-label="Show hidden icons" className="w-[21px]"><Caret className="rotate-180 text-white" /></button>
      <button aria-label="Network" className="w-6">
        <svg className="h-4 w-4" viewBox="0 0 16 16" aria-hidden="true">
          <path d="M5 3.500h10.500v8H5Z" fill="#6d809a" stroke="#1f2a38" strokeWidth="2.500" />
          <path d="M5 3.500h10v8H5Z" fill="#66788f" stroke="#fff" strokeWidth="1.300" />
          <path d="M7 14.500h7M10.500 12v2" stroke="#fff" strokeWidth="1.500" />
          <path d="M1 1v4h3V1M2.500 5v9H6" fill="none" stroke="#fff" strokeWidth="1.300" />
        </svg>
      </button>
      <button aria-label="Volume muted" className="w-5">
        <svg className="h-4 w-[17px]" viewBox="0 0 17 16" aria-hidden="true">
          <path d="M.8 5h2.500l5-4.300v14L3.300 10.500H.8Z" fill="#f4f6f8" stroke="#394658" strokeWidth="0.800" />
          <circle cx="11" cy="10.500" r="5" fill="#d23a35" stroke="#fff" strokeWidth="0.700" />
          <path d="M9 8.500l4 4M13 8.500l-4 4" stroke="#fff" strokeWidth="1.500" />
        </svg>
      </button>
      <time className="w-[74px] text-center leading-[17px]">9:10 AM<br />5/5/2022</time>
      <button aria-label="Show desktop" className="h-full w-[14px] border border-[#46566a] bg-gradient-to-br from-[#8898a8] via-[#5d6e80] to-[#94a5b5] shadow-[inset_0_0_0_1px_#a4b3c2]" />
    </div>
  </footer>
);

export default function App() {
  return (
    <div className="relative flex h-screen min-h-[620px] flex-col overflow-hidden font-['Open_Sans','Noto_Sans',sans-serif]">
      <Wallpaper />
      <div className="relative flex-1">
        <DesktopIcons />
        <ExplorerWindow />
        <BrowserWindow />
      </div>
      <Taskbar />
    </div>
  );
}
